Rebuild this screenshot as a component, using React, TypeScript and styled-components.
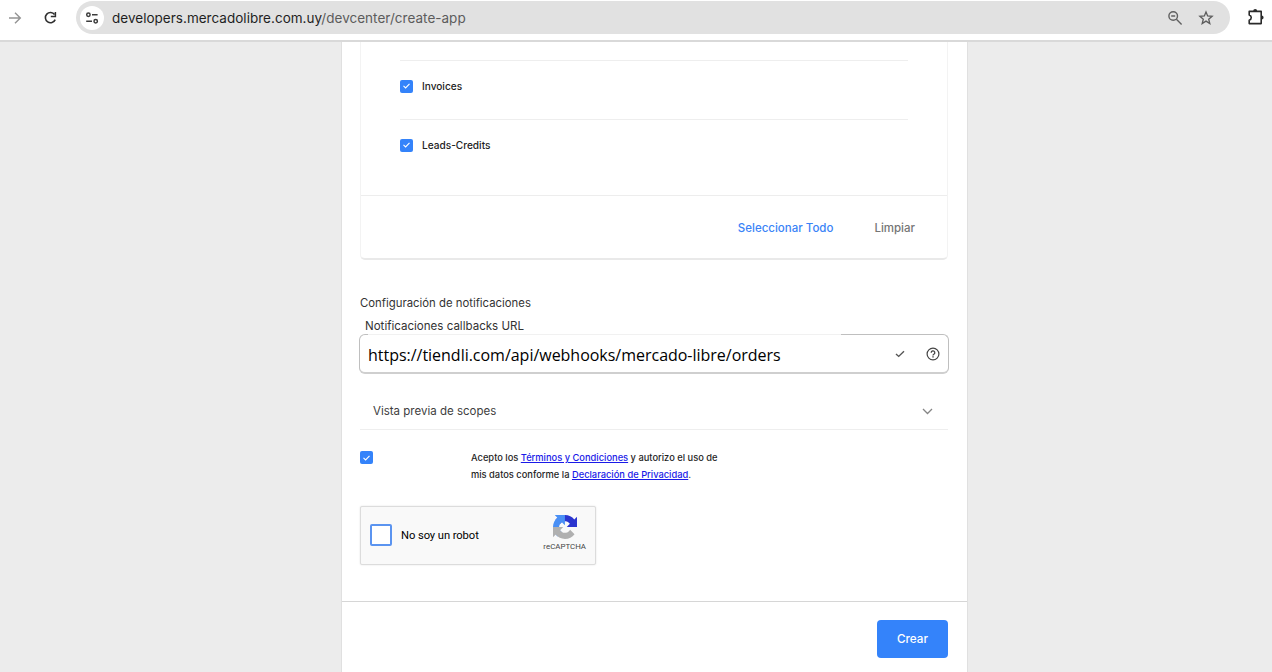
import React from "react";
import styled, { createGlobalStyle } from "styled-components";

const GlobalStyle = createGlobalStyle`
  *, *::before, *::after { box-sizing: border-box; }
  body {
    margin: 0;
    overflow: hidden;
    background: #ececec;
    font-family: Inter, "Liberation Sans", sans-serif;
    color: #333;
  }
`;

const Screen = styled.div`
  display: flex;
  flex-direction: column;
  height: 672px;
  overflow: hidden;
`;

const BrowserBar = styled.header`
  display: flex;
  align-items: flex-start;
  flex: none;
  height: 42px;
  padding: 1px 0 0 8px;
  background: #fff;
  border-bottom: 2px solid #d9d9d9;

  svg { display: block; flex: none; }
`;

const BarIcon = styled.span<{ $gap?: number; $top?: number }>`
  margin-left: ${(p) => p.$gap ?? 0}px;
  margin-top: ${(p) => p.$top ?? 9}px;
`;

const AddressBar = styled.div`
  display: flex;
  align-items: center;
  width: 1154px;
  height: 33px;
  margin-left: 18px;
  padding: 0 16px 0 4px;
  border-radius: 17px;
  background: #e1e1e1;
`;

const SiteInfo = styled.span`
  display: grid;
  place-items: center;
  width: 24px;
  height: 24px;
  border-radius: 50%;
  background: #fff;
`;

const Address = styled.span`
  flex: 1;
  margin-left: 8px;
  font-size: 13.5px;
  letter-spacing: 0.02px;
  line-height: 20px;
  white-space: nowrap;
  color: #1f1f1f;
`;

const AddressPath = styled.span`
  color: #5c5c5c;
`;

const AddressActions = styled.span`
  display: flex;
  gap: 15px;
`;

const Page = styled.main`
  display: flex;
  flex-direction: column;
  flex: none;
  width: 627px;
  height: 630px;
  margin-left: 341px;
  background: #fff;
  border: solid #e0e0e0;
  border-width: 0 1px;
`;

const Form = styled.form`
  height: 559px;
  padding: 0 19px 0 18px;
`;

const TopicsCard = styled.section`
  height: 218px;
  border: 1px solid #f3f3f3;
  border-top: 0;
  border-bottom: 2px solid #e9e9e9;
  border-radius: 0 0 5px 5px;
`;

const TopicList = styled.div`
  height: 154px;
  padding: 18px 39px 0;
  border-bottom: 1px solid #ededed;
`;

const Topic = styled.label`
  display: flex;
  align-items: center;
  height: 59px;
  padding-bottom: 8px;
  border-top: 1px solid #eee;
  font-size: 10.1px;
  font-weight: 550;
  color: #222;
`;

const TopicName = styled.span`
  margin-left: 9px;
  padding-bottom: 1px;
  line-height: 14px;
`;

const Tick = styled.span`
  display: grid;
  place-items: center;
  flex: none;
  width: 13px;
  height: 13px;
  border-radius: 2px;
  background: #3483fa;
`;

const CardActions = styled.div`
  display: flex;
  align-items: center;
  justify-content: flex-end;
  gap: 41px;
  height: 64px;
  padding-right: 32px;
`;

const TextButton = styled.button<{ $primary?: boolean }>`
  padding: 0;
  border: 0;
  background: none;
  font: 550 11.5px/16px Inter, "Liberation Sans", sans-serif;
  color: ${(p) => (p.$primary ? "#3a83f7" : "#757575")};
`;

const SectionTitle = styled.h2`
  margin: 34px 0 0;
  padding-top: 1px;
  font-size: 11.35px;
  font-weight: 400;
  line-height: 16px;
  color: #333;
`;

const FieldLabel = styled.label`
  display: block;
  margin: 7px 0 0 5px;
  font-size: 11.55px;
  line-height: 16px;
  color: #333;
`;

const UrlField = styled.div`
  position: relative;
  display: flex;
  align-items: center;
  width: 590px;
  height: 40px;
  margin: 0 0 0 -1px;
  padding: 0 8px 0 8px;
  border: 1px solid #bfbfbf;
  border-bottom: 2px solid #cfcfcf;
  border-radius: 6px;

  &::before {
    content: "";
    position: absolute;
    top: -1px;
    left: 8px;
    width: 473px;
    height: 1px;
    background: #f1f1f1;
  }

  svg { display: block; flex: none; }
`;

const UrlValue = styled.span`
  flex: 1;
  padding-top: 3px;
  font: 16px/22px "Open Sans", "Noto Sans", sans-serif;
  letter-spacing: -0.02px;
  color: #000;
`;

const FieldIcons = styled.span`
  display: flex;
  align-items: center;
  gap: 21px;
`;

const Accordion = styled.div`
  display: flex;
  align-items: center;
  justify-content: space-between;
  height: 56px;
  padding: 19px 15px 0 13px;
  border-bottom: 1px solid #eee;
  font-size: 11.5px;
  color: #404040;
`;

const Consent = styled.div`
  display: flex;
  align-items: flex-start;
  margin-top: 19px;
  height: 36px;

  ${Tick} { margin-top: 2px; }
`;

const ConsentText = styled.p`
  margin: 0 0 0 98px;
  font-size: 9.32px;
  font-weight: 500;
  line-height: 17px;
  white-space: nowrap;
  color: #1f1f1f;
`;

const Link = styled.a`
  color: #1a1ae8;
  text-decoration: underline;
`;

const Captcha = styled.div`
  display: flex;
  align-items: center;
  width: 236px;
  height: 59px;
  margin-top: 21px;
  padding: 0 9px 1px;
  border: 1px solid #dcdcdc;
  border-radius: 2px;
  background: #f9f9f9;
  box-shadow: 0 0 2px rgba(0, 0, 0, 0.12);
  font-family: Roboto, "Liberation Sans", sans-serif;
`;

const CaptchaBox = styled.span`
  width: 22px;
  height: 22px;
  border: 2px solid #5b94f0;
  border-radius: 2px;
  background: #fff;
`;

const CaptchaText = styled.span`
  flex: 1;
  margin-left: 9px;
  padding-top: 1px;
  font-size: 11.2px;
  font-weight: 450;
  letter-spacing: -0.07px;
  color: #000;
`;

const CaptchaBrand = styled.span`
  display: flex;
  flex-direction: column;
  align-items: center;
  padding-bottom: 3px;
  font-size: 7.9px;
  line-height: 10px;
  color: #444;

  svg { display: block; margin-bottom: 3px; }
`;

const FormFooter = styled.footer`
  display: flex;
  justify-content: flex-end;
  flex: 1;
  padding: 18px 19px 0;
  border-top: 1px solid #d6d6d6;
`;

const SubmitButton = styled.button`
  width: 71px;
  height: 38px;
  padding: 0;
  border: 0;
  border-radius: 4px;
  background: #3483fa;
  font: 550 11.7px/16px Inter, "Liberation Sans", sans-serif;
  color: #fff;
`;

const Check = () => (
  <Tick>
    <svg width="7" height="6" viewBox="0 0 7 6" fill="none" stroke="#fff" strokeWidth="1.1">
      <path d="M0.5 2.9 2.6 4.9 6.5 0.9" />
    </svg>
  </Tick>
);

const ForwardIcon = () => (
  <svg width="14" height="16" viewBox="0 0 14 16" fill="none" stroke="#949494" strokeWidth="1.4">
    <path d="M1 8h11M7 2.7 12.3 8 7 13.3" />
  </svg>
);

const ReloadIcon = () => (
  <svg width="14" height="16" viewBox="0 0 14 16" fill="none" stroke="#2f2f2f" strokeWidth="1.6">
    <path d="M10.6 4.6A5.1 5.1 0 1 0 11.2 9.6" />
    <path d="M11.4 2v4.6H6.8" strokeWidth="1.5" />
  </svg>
);

const TuneIcon = () => (
  <svg width="14" height="14" viewBox="0 0 14 14" fill="none" stroke="#3c3c3c" strokeWidth="1.5">
    <circle cx="3.4" cy="3.8" r="1.7" />
    <path d="M7 3.8h5.6M1.2 10.2H7" />
    <circle cx="10.7" cy="10.2" r="1.7" />
  </svg>
);

const ZoomOutIcon = () => (
  <svg width="16" height="16" viewBox="0 0 16 16" fill="none" stroke="#606060" strokeWidth="1.4">
    <circle cx="6.2" cy="6" r="4.3" />
    <path d="M4.2 6h4M9.4 9.3 14.6 14.4" />
  </svg>
);

const StarIcon = () => (
  <svg width="16" height="16" viewBox="0 0 16 16" fill="none" stroke="#5c5c5c" strokeWidth="1.3">
    <path d="m8 1.9 1.65 4.1 4.45.35-3.4 2.85 1.1 4.3L8 11.1l-3.8 2.4 1.1-4.3-3.4-2.85 4.45-.35Z" />
  </svg>
);

const ExtensionIcon = () => (
  <svg width="18" height="18" viewBox="0 0 18 18" fill="none">
    <path
      d="M2.2 3.4h12v12.2h-12v-3.3a2.8 2.8 0 0 0 0-5.4Z"
      stroke="#2a2a2a"
      strokeWidth="1.6"
      strokeLinejoin="round"
    />
    <path d="M6.2 3a2 2 0 0 1 4 0ZM14.6 7.5a2 2 0 0 1 0 4Z" fill="#2a2a2a" />
  </svg>
);

const ValidIcon = () => (
  <svg width="10" height="8" viewBox="0 0 10 8" fill="none" stroke="#555" strokeWidth="1.4">
    <path d="M1 3.9 3.7 6.4 9 1.2" />
  </svg>
);

const HelpIcon = () => (
  <svg width="14" height="14" viewBox="0 0 14 14" fill="none" stroke="#444">
    <circle cx="7" cy="7" r="5.9" strokeWidth="1.2" />
    <path d="M5.2 5.7a1.8 1.8 0 1 1 2.7 1.5c-.6.35-.9.6-.9 1.2" strokeWidth="1.3" />
    <path d="M7 9.3v1.3" strokeWidth="1.4" />
  </svg>
);

const ChevronIcon = () => (
  <svg width="11" height="7" viewBox="0 0 11 7" fill="none" stroke="#858585" strokeWidth="1.3">
    <path d="M1 1 5.5 5.5 10 1" />
  </svg>
);

const RecaptchaLogo = () => (
  <svg width="24" height="24" viewBox="0 0 64 64">
    <path
      fill="#2b35cf"
      d="M64 31.955l-.033-1.37V4.687l-7.16 7.16C50.948 4.674 42.033.093 32.05.093c-10.4 0-19.622 4.96-25.458 12.64l11.736 11.86a15.55 15.55 0 0 1 4.754-5.334c2.05-1.6 4.952-2.906 8.968-2.906.485 0 .86.057 1.135.163 4.976.393 9.288 3.14 11.828 7.124l-8.307 8.307L64 31.953"
    />
    <path
      fill="#4a90f5"
      d="M31.862.094l-1.37.033H4.594l7.16 7.16C4.58 13.147 0 22.06 0 32.046c0 10.4 4.96 19.622 12.64 25.458L24.5 45.768a15.55 15.55 0 0 1-5.334-4.754c-1.6-2.05-2.906-4.952-2.906-8.968 0-.485.057-.86.163-1.135.393-4.976 3.14-9.288 7.124-11.828l8.307 8.307L31.86.095"
    />
    <path
      fill="#b0b0b0"
      d="M.001 32.045l.033 1.37v25.898l7.16-7.16c5.86 7.173 14.774 11.754 24.76 11.754 10.4 0 19.622-4.96 25.458-12.64l-11.736-11.86a15.55 15.55 0 0 1-4.754 5.334c-2.05 1.6-4.952 2.906-8.968 2.906-.485 0-.86-.057-1.135-.163-4.976-.393-9.288-3.14-11.828-7.124l8.307-8.307c-10.522.04-22.4.066-27.295-.005"
    />
  </svg>
);

const topics = ["Invoices", "Leads-Credits"];

export default function App() {
  return (
    <Screen>
      <GlobalStyle />
      <BrowserBar>
        <BarIcon><ForwardIcon /></BarIcon>
        <BarIcon $gap={22}><ReloadIcon /></BarIcon>
        <AddressBar>
          <SiteInfo><TuneIcon /></SiteInfo>
          <Address>
            developers.mercadolibre.com.uy<AddressPath>/devcenter/create-app</AddressPath>
          </Address>
          <AddressActions>
            <ZoomOutIcon />
            <StarIcon />
          </AddressActions>
        </AddressBar>
        <BarIcon $gap={17} $top={7}><ExtensionIcon /></BarIcon>
      </BrowserBar>
      <Page>
        <Form>
          <TopicsCard>
            <TopicList>
              {topics.map((name) => (
                <Topic key={name}>
                  <Check />
                  <TopicName>{name}</TopicName>
                </Topic>
              ))}
            </TopicList>
            <CardActions>
              <TextButton type="button" $primary>Seleccionar Todo</TextButton>
              <TextButton type="button">Limpiar</TextButton>
            </CardActions>
          </TopicsCard>
          <SectionTitle>Configuración de notificaciones</SectionTitle>
          <FieldLabel>Notificaciones callbacks URL</FieldLabel>
          <UrlField>
            <UrlValue>https://tiendli.com/api/webhooks/mercado-libre/orders</UrlValue>
            <FieldIcons>
              <ValidIcon />
              <HelpIcon />
            </FieldIcons>
          </UrlField>
          <Accordion>
            Vista previa de scopes
            <ChevronIcon />
          </Accordion>
          <Consent>
            <Check />
            <ConsentText>
              Acepto los <Link>Términos y Condiciones</Link> y autorizo el uso de
              <br />
              mis datos conforme la <Link>Declaración de Privacidad</Link>.
            </ConsentText>
          </Consent>
          <Captcha>
            <CaptchaBox />
            <CaptchaText>No soy un robot</CaptchaText>
            <CaptchaBrand>
              <RecaptchaLogo />
              reCAPTCHA
            </CaptchaBrand>
          </Captcha>
        </Form>
        <FormFooter>
          <SubmitButton type="button">Crear</SubmitButton>
        </FormFooter>
      </Page>
    </Screen>
  );
}
